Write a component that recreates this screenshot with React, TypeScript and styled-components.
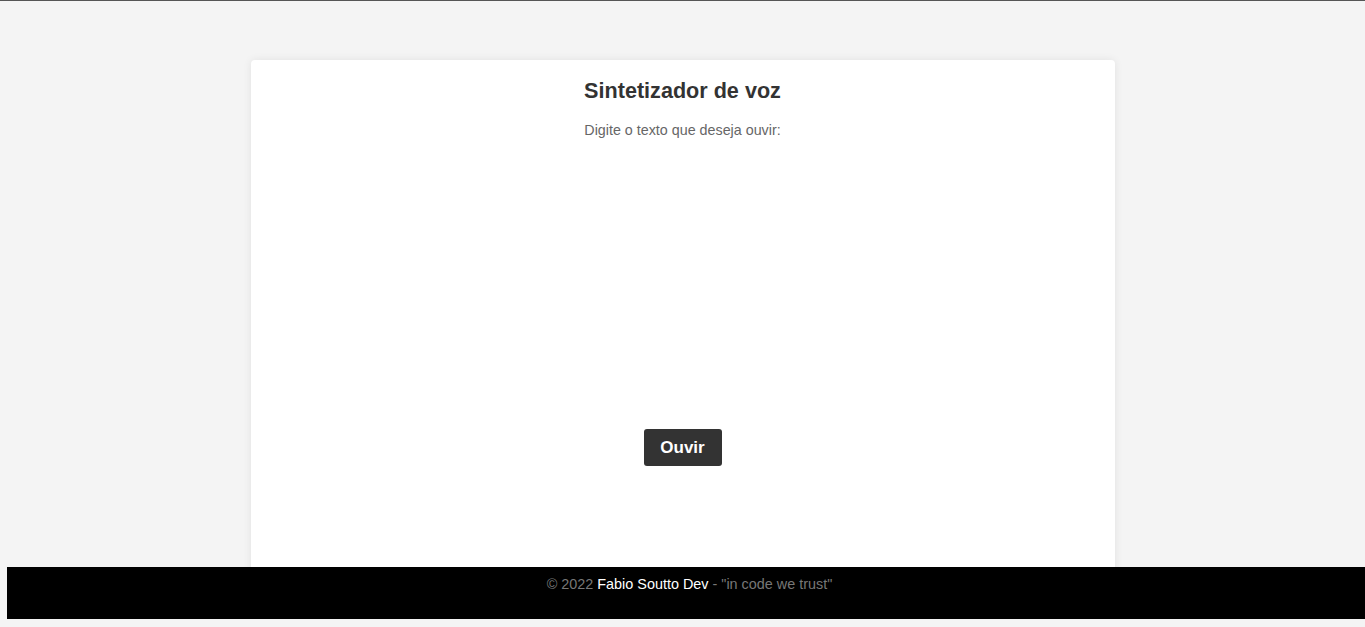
import React from "react";
import styled, { createGlobalStyle } from "styled-components";

const Global = createGlobalStyle`
  html, body { margin: 0; padding: 0; }
  body {
    background: #f4f4f4;
    border-top: 1px solid #555;
    font-family: "Liberation Sans", Arial, sans-serif;
    overflow: hidden;
  }
`;

const Page = styled.main`
  display: flex;
  justify-content: center;
  padding-top: 59px;
  height: 600px;
  box-sizing: border-box;
`;

const Card = styled.section`
  width: 864px;
  background: #fff;
  border-radius: 4px;
  box-shadow: 0 0 8px rgba(0, 0, 0, 0.08);
  display: flex;
  flex-direction: column;
  align-items: center;
  padding-top: 18px;
  box-sizing: border-box;
`;

const Title = styled.h1`
  margin: 0;
  font-size: 21.6px;
  font-weight: bold;
  color: #333;
  line-height: 26px;
`;

const Label = styled.label`
  margin-top: 18px;
  font-size: 14.3px;
  color: #666;
  line-height: 16px;
`;

const TextArea = styled.textarea`
  margin-top: 14px;
  width: 600px;
  height: 258px;
  border: none;
  outline: none;
  resize: none;
  background: transparent;
`;

const Button = styled.button`
  margin-top: 15px;
  width: 78px;
  height: 37px;
  background: #333;
  color: #fff;
  border: none;
  border-radius: 3px;
  font-family: "Liberation Sans", Arial, sans-serif;
  font-size: 17px;
  font-weight: bold;
  cursor: pointer;
`;

const Footer = styled.footer`
  position: fixed;
  left: 7px;
  bottom: 8px;
  width: 1365px;
  height: 52px;
  background: #000;
  color: #777;
  font-size: 14.4px;
  text-align: center;
  padding-top: 9px;
  box-sizing: border-box;
`;

const Author = styled.span`
  color: #fff;
`;

export default function App() {
  return (
    <>
      <Global />
      <Page>
        <Card>
          <Title>Sintetizador de voz</Title>
          <Label htmlFor="texto">Digite o texto que deseja ouvir:</Label>
          <TextArea id="texto" />
          <Button>Ouvir</Button>
        </Card>
      </Page>
      <Footer>
        © 2022 <Author>Fabio Soutto Dev</Author> - "in code we trust"
      </Footer>
    </>
  );
}
